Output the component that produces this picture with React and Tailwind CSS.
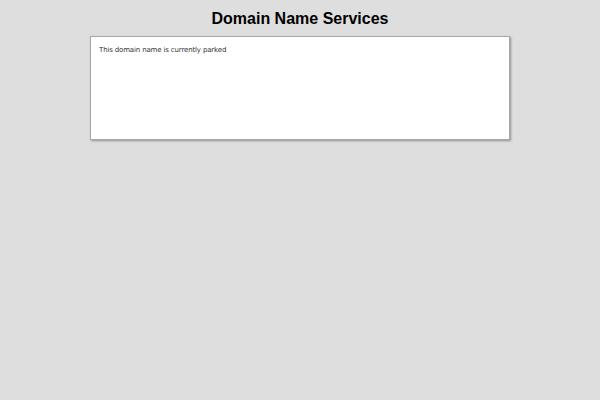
export default function App() {
  return (
    <div className="min-h-[400px] bg-[#dedede] pt-[9px]" style={{ fontFamily: '"DejaVu Sans", Verdana, sans-serif' }}>
      <h1
        className="text-center text-[16px] font-bold leading-[20px] text-black"
        style={{ fontFamily: '"Liberation Sans", Arial, sans-serif' }}
      >
        Domain Name Services
      </h1>
      <div className="mx-auto mt-[7px] h-[104px] w-[420px] border border-[#a8a8a8] bg-white px-[8px] py-[8px] shadow-[1px_1px_2px_rgba(0,0,0,0.35)]">
        <p className="text-[7px] leading-[10px] tracking-[-0.15px] text-[#333]">This domain name is currently parked</p>
      </div>
    </div>
  );
}
